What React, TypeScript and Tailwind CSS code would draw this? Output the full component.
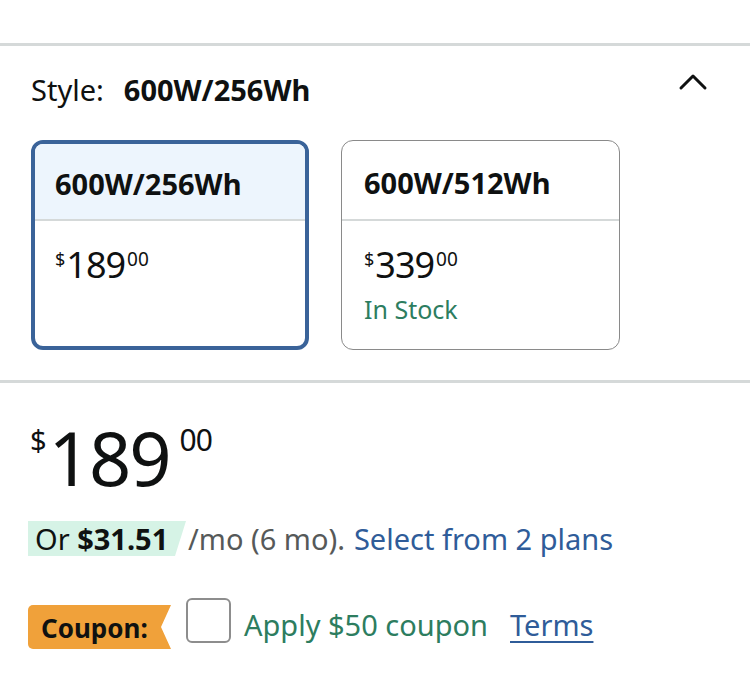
import React from "react";

const font = { fontFamily: '"Noto Sans", "Open Sans", sans-serif' };

const Price = ({ whole, big }: { whole: string; big?: boolean }) =>
  big ? (
    <div className="flex items-start text-[#0f1111]">
      <span className="text-[29px] leading-none mt-[4px] mr-[2px]">$</span>
      <span className="text-[74px] leading-none tracking-[-2px]">{whole}</span>
      <span className="text-[30px] leading-none mt-[4px] ml-[10px] tracking-[-1px]">00</span>
    </div>
  ) : (
    <div className="flex items-start text-[#0f1111]">
      <span className="text-[18px] leading-none mt-[3px] mr-[1px]">$</span>
      <span className="text-[36px] leading-none tracking-[-1px]">{whole}</span>
      <span className="text-[19px] leading-none mt-[3px] ml-[2px]">00</span>
    </div>
  );

const App: React.FC = () => {
  return (
    <div className="w-[750px] h-[681px] bg-white overflow-hidden" style={font}>
      <div className="h-[43px]" />
      <div className="h-[3px] bg-[#d5d9d9]" />

      {/* Style header */}
      <div className="flex items-center justify-between pl-[31px] pr-[42px] h-[86px]">
        <div className="flex items-center gap-[20px] text-[29px] text-[#0f1111] leading-none">
          <span>Style:</span>
          <span className="font-bold">600W/256Wh</span>
        </div>
        <svg width="30" height="18" viewBox="0 0 30 18" fill="none" className="-mt-[14px]">
          <path d="M3 15L15 3L27 15" stroke="#0f1111" strokeWidth="3" strokeLinecap="round" strokeLinejoin="round" />
        </svg>
      </div>

      {/* Options */}
      <div className="flex gap-[32px] pl-[31px] mt-[8px]">
        <div className="w-[278px] h-[210px] rounded-[12px] border-[4px] border-[#3a6399] overflow-hidden">
          <div className="h-[77px] bg-[#edf5fd] border-b-[2px] border-[#d5d9d9] flex items-center px-[20px] pt-[4px]">
            <span className="text-[29px] leading-none font-bold text-[#0f1111]">600W/256Wh</span>
          </div>
          <div className="px-[20px] pt-[26px]">
            <Price whole="189" />
          </div>
        </div>
        <div className="w-[279px] h-[210px] rounded-[12px] border-[1.5px] border-[#8a8a8a] overflow-hidden">
          <div className="h-[80px] border-b-[2px] border-[#d5d9d9] flex items-center px-[22px] pt-[4px]">
            <span className="text-[29px] leading-none font-bold text-[#0f1111]">600W/512Wh</span>
          </div>
          <div className="px-[22px] pt-[26px]">
            <Price whole="339" />
            <div className="text-[25px] text-[#2d7d5f] mt-[14px] leading-none">In Stock</div>
          </div>
        </div>
      </div>

      <div className="h-[3px] bg-[#d5d9d9] mt-[30px]" />

      {/* Main price */}
      <div className="pl-[30px] pt-[38px]">
        <Price whole="189" big />
      </div>

      {/* Financing */}
      <div className="flex items-center pl-[28px] mt-[26px] h-[35px] text-[29px] leading-none">
        <div
          className="h-[35px] w-[158px] bg-[#d6f3e6] flex items-center pl-[7px] text-[#0f1111]"
          style={{ clipPath: "polygon(0 0, 100% 0, calc(100% - 11px) 100%, 0 100%)" }}
        >
          Or&nbsp;<span className="font-bold">$31.51</span>
        </div>
        <span className="text-[#565959] ml-[2px]">/mo (6 mo).</span>
        <span className="text-[#2f5c99] ml-[9px]">Select from 2 plans</span>
      </div>

      {/* Coupon */}
      <div className="flex items-start pl-[28px] mt-[42px] h-[52px]">
        <div
          className="h-[44px] w-[143px] mt-[7px] bg-[#f0a13a] rounded-l-[5px] flex items-center pl-[13px] pt-[2px] text-[26px] leading-none font-bold text-[#0f1111]"
          style={{ clipPath: "polygon(0 0, 100% 0, calc(100% - 10px) 50%, 100% 100%, 0 100%)" }}
        >
          Coupon:
        </div>
        <div className="w-[45px] h-[45px] ml-[15px] rounded-[6px] border-[2px] border-[#8d8d8d] bg-white" />
        <span className="ml-[13px] mt-[12px] text-[29px] leading-none text-[#2d7d5f]">Apply $50 coupon</span>
        <span className="ml-[22px] mt-[12px] text-[29px] leading-none text-[#2f5c99] underline underline-offset-[5px] decoration-[2px]">Terms</span>
      </div>
    </div>
  );
};

export default App;
